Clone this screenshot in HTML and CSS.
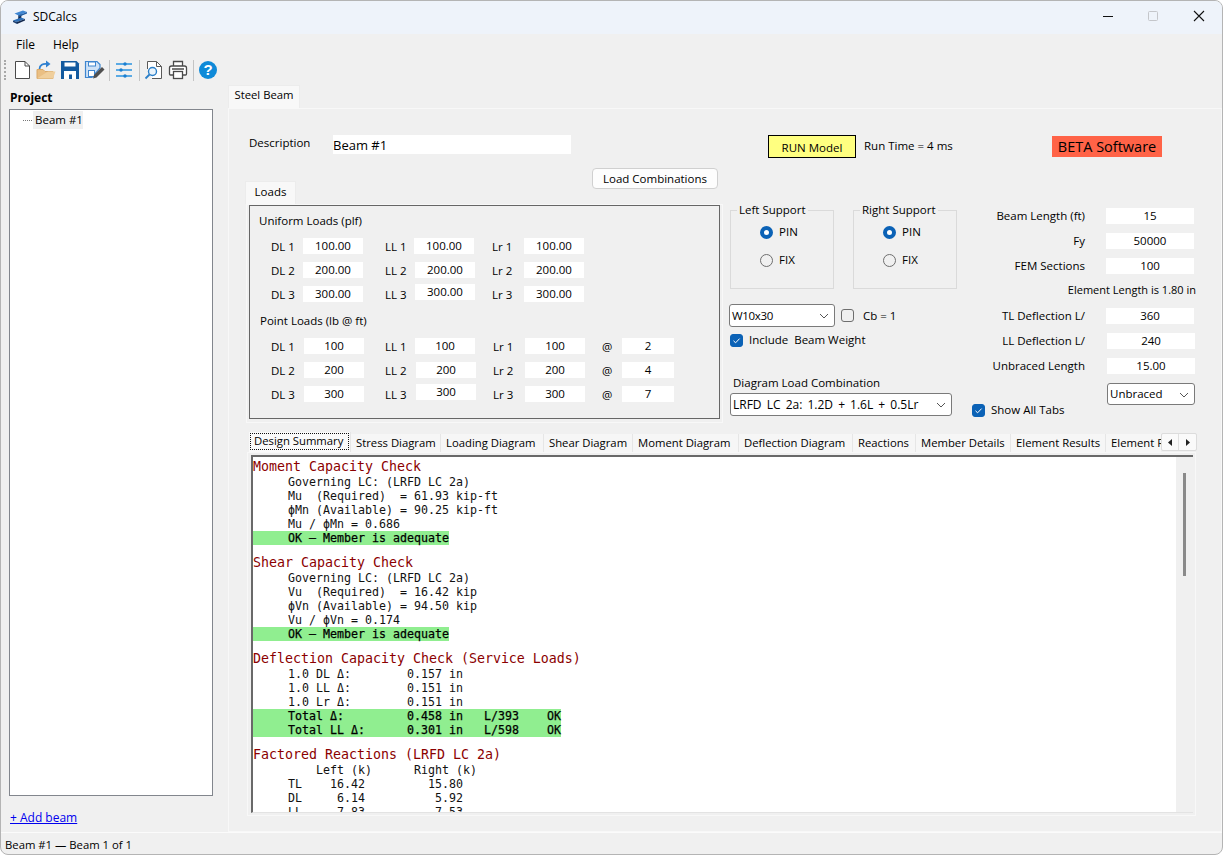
FILE: index.html
```html
<!DOCTYPE html>
<html lang="en">
<head>
<meta charset="utf-8">
<title>SDCalcs</title>
<link rel="stylesheet" href="styles.css">
</head>
<body>
<div class="window">
  <header class="titlebar">
    <svg class="app-icon" width="16" height="16" viewBox="0 0 16 16"><path d="M6.5 6 9.5 5 9.2 10 6 11Z" fill="#16284a"/><path d="M2.5 4.5 11 1.5 15 3 6.5 6.5Z" fill="#3f86d2"/><path d="M6.5 6.5 15 3 15 4.5 6.5 8Z" fill="#1f5da3"/><path d="M1 11.5 9 8.5 13 10 5 13Z" fill="#2c6fb8"/><path d="M5 13 13 10 13 11.5 5 15Z" fill="#13294f"/><path d="M1 11.5 5 13V15L1 13Z" fill="#1c3f70"/></svg>
    <span class="app-name">SDCalcs</span>
    <div class="win-controls">
      <svg class="win-btn" width="46" height="32" viewBox="0 0 46 32"><path d="M18 15.5H28" stroke="#111" stroke-width="1"/></svg>
      <svg class="win-btn" width="46" height="32" viewBox="0 0 46 32"><rect x="17.5" y="10.5" width="9" height="9" rx="1" fill="none" stroke="#c4c6ca"/></svg>
      <svg class="win-btn" width="46" height="32" viewBox="0 0 46 32"><path d="M17 10 27 20M27 10 17 20" stroke="#111" stroke-width="1.1"/></svg>
    </div>
  </header>

  <nav class="menubar"><span class="menu-item">File</span><span class="menu-item">Help</span></nav>

  <div class="toolbar">
    <span class="grip"></span>
    <svg class="tool" viewBox="0 0 24 24"><path d="M5.5 3.5H15L19.5 8V20.5H5.5Z" fill="#fff" stroke="#4a4a4a"/><path d="M15 3.5V8H19.5" fill="none" stroke="#4a4a4a"/></svg>
    <svg class="tool" viewBox="0 0 24 24"><path d="M3 20.5V11.5H9L11 13.5H19V20.5Z" fill="#eabf83" stroke="#d9a868"/><path d="M14 13.5H21.5L19 20.5H3Z" fill="#f0cf9c"/><path d="M5.5 11C5.5 7 9 5.5 13 6" fill="none" stroke="#2f80d0" stroke-width="1.8"/><path d="M12 2.5 16.5 6 12 9.5Z" fill="#2f80d0"/></svg>
    <svg class="tool" viewBox="0 0 24 24"><path d="M3 3H18.5L21 5.5V21H3Z" fill="#135a9f"/><rect x="6.5" y="4.5" width="11" height="4" fill="#fff"/><rect x="6" y="13" width="12" height="8" fill="#fff"/><rect x="11" y="16.5" width="3" height="4.5" fill="#135a9f"/></svg>
    <svg class="tool" viewBox="0 0 24 24"><path d="M3.5 3.5H15L18 6.5V10L10 19.5H3.5Z" fill="#cfe2f6" stroke="#3f86cf" stroke-width="1.2"/><rect x="6.5" y="4" width="7" height="4" fill="#fff" stroke="#3f86cf"/><rect x="6.5" y="12.5" width="6" height="6" fill="#fff" stroke="#3f86cf"/><path d="M11 20.5 12 17 20 9 22.5 11.5 14.5 19.5Z" fill="#4f4f4f"/></svg>
    <span class="tool-sep"></span>
    <svg class="tool" viewBox="0 0 24 24"><path d="M4 6H20M4 12H20M4 18H20" stroke="#2a93e0" stroke-width="1.7"/><circle cx="13" cy="6" r="1.7" fill="#1b7fd0"/><circle cx="9" cy="12" r="1.7" fill="#1b7fd0"/><circle cx="13" cy="18" r="1.7" fill="#1b7fd0"/></svg>
    <span class="tool-sep"></span>
    <svg class="tool" viewBox="0 0 24 24"><path d="M5.5 11V3.5H14.5L19.5 8.5V20.5H10" fill="#fff" stroke="#5a5a5a"/><path d="M14.5 3.5V8.5H19.5" fill="none" stroke="#5a5a5a"/><circle cx="10.5" cy="13.5" r="4" fill="#eaf4fc" stroke="#2a7fc9" stroke-width="1.4"/><path d="M7.5 16.5 3.5 20.5" stroke="#2a7fc9" stroke-width="1.8"/></svg>
    <svg class="tool" viewBox="0 0 24 24"><path d="M7.5 8V3.5H16.5V8M7.5 17H4.5C3.9 17 3.5 16.6 3.5 16V10C3.5 8.9 4.2 8 5.5 8H18.5C19.8 8 20.5 8.9 20.5 10V16C20.5 16.6 20.1 17 19.5 17H16.5" fill="#fff" stroke="#4a4a4a" stroke-width="1.3"/><rect x="7.5" y="13.5" width="9" height="7" fill="#fff" stroke="#4a4a4a" stroke-width="1.3"/><path d="M6 11H18" stroke="#4a4a4a" stroke-width="1.3"/></svg>
    <span class="tool-sep"></span>
    <svg class="tool" viewBox="0 0 24 24"><circle cx="12" cy="12" r="9" fill="#0f8ad8"/><text x="12" y="17.3" class="help-mark">?</text></svg>
  </div>

  <div class="main">
    <aside class="sidebar">
      <div class="project-label">Project</div>
      <div class="tree">
        <div class="tree-node"><span class="tree-dots"></span><span class="tree-name">Beam #1</span></div>
      </div>
      <a class="add-link" href="#">+ Add beam</a>
    </aside>

    <section class="workspace">
      <div class="main-tab">Steel Beam</div>
      <div class="page">
        <div class="top-row">
          <div class="desc-label">Description</div>
          <div class="desc-field">Beam #1</div>
          <div class="run-btn">RUN Model</div>
          <div class="run-time">Run Time = 4 ms</div>
          <div class="beta">BETA Software</div>
        </div>

        <div class="config">
          <div class="loads-col">
            <div class="loads-head">
              <div class="loads-tab">Loads</div>
              <div class="combo-btn">Load Combinations</div>
            </div>
            <div class="loads-panel">
              <div class="loads-box">
                <div class="group-title">Uniform Loads (plf)</div>
                <div class="load-grid">
                  <span class="lbl">DL 1</span><span class="field">100.00</span><span class="lbl pad-ll">LL 1</span><span class="field">100.00</span><span class="lbl pad-lr">Lr 1</span><span class="field">100.00</span>
                  <span class="lbl">DL 2</span><span class="field">200.00</span><span class="lbl pad-ll">LL 2</span><span class="field shift">200.00</span><span class="lbl pad-lr">Lr 2</span><span class="field">200.00</span>
                  <span class="lbl">DL 3</span><span class="field">300.00</span><span class="lbl pad-ll">LL 3</span><span class="field shift raise">300.00</span><span class="lbl pad-lr">Lr 3</span><span class="field">300.00</span>
                </div>
                <div class="group-title point-title">Point Loads (lb @ ft)</div>
                <div class="load-grid point-grid">
                  <span class="lbl">DL 1</span><span class="field">100</span><span class="lbl pad-ll">LL 1</span><span class="field">100</span><span class="lbl pad-lr">Lr 1</span><span class="field">100</span><span class="lbl pad-at">@</span><span class="field">2</span>
                  <span class="lbl">DL 2</span><span class="field">200</span><span class="lbl pad-ll">LL 2</span><span class="field shift">200</span><span class="lbl pad-lr">Lr 2</span><span class="field">200</span><span class="lbl pad-at">@</span><span class="field">4</span>
                  <span class="lbl">DL 3</span><span class="field">300</span><span class="lbl pad-ll">LL 3</span><span class="field shift raise">300</span><span class="lbl pad-lr">Lr 3</span><span class="field">300</span><span class="lbl pad-at">@</span><span class="field">7</span>
                </div>
              </div>
            </div>
          </div>

          <div class="mid-col">
            <div class="supports">
              <div class="support">
                <span class="legend">Left Support</span>
                <div class="radio-row"><span class="radio on"></span>PIN</div>
                <div class="radio-row"><span class="radio"></span>FIX</div>
              </div>
              <div class="support">
                <span class="legend">Right Support</span>
                <div class="radio-row"><span class="radio on"></span>PIN</div>
                <div class="radio-row"><span class="radio"></span>FIX</div>
              </div>
            </div>
            <div class="section-row">
              <div class="select section-select">W10x30<svg class="chev" width="10" height="6" viewBox="0 0 10 6"><path d="M1 1 5 5 9 1" fill="none" stroke="#555"/></svg></div>
              <span class="check"></span><span class="cb-label">Cb = 1</span>
            </div>
            <div class="check-row include"><span class="check on"><svg width="13" height="13" viewBox="0 0 13 13"><path d="M3.5 6.8 5.6 8.8 9.6 4.6" fill="none" stroke="#fff"/></svg></span>Include&nbsp; Beam Weight</div>
            <div class="diagram-label">Diagram Load Combination</div>
            <div class="select diagram-select">LRFD LC 2a: 1.2D + 1.6L + 0.5Lr<svg class="chev" width="10" height="6" viewBox="0 0 10 6"><path d="M1 1 5 5 9 1" fill="none" stroke="#555"/></svg></div>
          </div>

          <div class="props-col">
            <div class="prop"><span class="prop-label">Beam Length (ft)</span><span class="field prop-field">15</span></div>
            <div class="prop"><span class="prop-label">Fy</span><span class="field prop-field">50000</span></div>
            <div class="prop"><span class="prop-label">FEM Sections</span><span class="field prop-field">100</span></div>
            <div class="element-note">Element Length is 1.80 in</div>
            <div class="prop"><span class="prop-label">TL Deflection L/</span><span class="field prop-field">360</span></div>
            <div class="prop"><span class="prop-label">LL Deflection L/</span><span class="field prop-field shift">240</span></div>
            <div class="prop"><span class="prop-label">Unbraced Length</span><span class="field prop-field shift">15.00</span></div>
            <div class="props-foot">
              <div class="check-row show-tabs"><span class="check on"><svg width="13" height="13" viewBox="0 0 13 13"><path d="M3.5 6.8 5.6 8.8 9.6 4.6" fill="none" stroke="#fff"/></svg></span>Show All Tabs</div>
              <div class="select brace-select">Unbraced<svg class="chev" width="10" height="6" viewBox="0 0 10 6"><path d="M1 1 5 5 9 1" fill="none" stroke="#555"/></svg></div>
            </div>
          </div>
        </div>

        <div class="results">
          <div class="result-tabs">
            <div class="tab-strip">
              <span class="rtab active"><span class="focus">Design Summary</span></span>
              <span class="rtab">Stress Diagram</span>
              <span class="rtab">Loading Diagram</span>
              <span class="rtab">Shear Diagram</span>
              <span class="rtab">Moment Diagram</span>
              <span class="rtab">Deflection Diagram</span>
              <span class="rtab">Reactions</span>
              <span class="rtab">Member Details</span>
              <span class="rtab">Element Results</span>
              <span class="rtab">Element Results</span>
            </div>
            <div class="tab-arrows">
              <span class="arrow"><svg width="5" height="7" viewBox="0 0 5 7"><path d="M4 0V7L0 3.5Z" fill="#222"/></svg></span>
              <span class="arrow"><svg width="5" height="7" viewBox="0 0 5 7"><path d="M1 0V7L5 3.5Z" fill="#222"/></svg></span>
            </div>
          </div>
          <div class="result-body">
            <div class="report-box">
              <div class="report">
                <div class="rh">Moment Capacity Check</div>
                <div class="rl">     Governing LC: (LRFD LC 2a)</div>
                <div class="rl">     Mu  (Required)  = 61.93 kip-ft</div>
                <div class="rl">     ϕMn (Available) = 90.25 kip-ft</div>
                <div class="rl">     Mu / ϕMn = 0.686</div>
                <div class="rl ok">     OK — Member is adequate</div>
                <div class="rh">Shear Capacity Check</div>
                <div class="rl">     Governing LC: (LRFD LC 2a)</div>
                <div class="rl">     Vu  (Required)  = 16.42 kip</div>
                <div class="rl">     ϕVn (Available) = 94.50 kip</div>
                <div class="rl">     Vu / ϕVn = 0.174</div>
                <div class="rl ok">     OK — Member is adequate</div>
                <div class="rh">Deflection Capacity Check (Service Loads)</div>
                <div class="rl">     1.0 DL Δ:        0.157 in</div>
                <div class="rl">     1.0 LL Δ:        0.151 in</div>
                <div class="rl">     1.0 Lr Δ:        0.151 in</div>
                <div class="rl ok">     Total Δ:         0.458 in   L/393    OK</div>
                <div class="rl ok">     Total LL Δ:      0.301 in   L/598    OK</div>
                <div class="rh">Factored Reactions (LRFD LC 2a)</div>
                <div class="rl">         Left (k)      Right (k)</div>
                <div class="rl">     TL    16.42         15.80</div>
                <div class="rl">     DL     6.14          5.92</div>
                <div class="rl">     LL     7.83          7.53</div>
              </div>
              <div class="scrollbar"><span class="thumb"></span></div>
            </div>
          </div>
        </div>
      </div>
    </section>
  </div>

  <footer class="statusbar">Beam #1 — Beam 1 of 1</footer>
</div>
</body>
</html>
```

FILE: styles.css
```css
* { box-sizing: border-box; }
html, body { margin: 0; padding: 0; background: #fff; }
body {
  width: 1225px;
  height: 857px;
  overflow: hidden;
  font-family: "Open Sans", "Noto Sans", "Liberation Sans", sans-serif;
  font-size: 11.5px;
  line-height: 16px;
  color: #000;
}
.window {
  width: 1223px;
  height: 855px;
  background: #f0f0f0;
  border: 1px solid #b4b4b4;
  border-radius: 8px;
  overflow: hidden;
  display: flex;
  flex-direction: column;
}
.titlebar {
  height: 33px;
  flex: none;
  background: #eef3fa;
  display: flex;
  align-items: center;
  padding-left: 11px;
}
.app-icon { flex: none; margin-top: -1px; }
.app-name { margin-left: 5px; font-size: 12px; margin-top: -2px; }
.win-controls { margin-left: auto; display: flex; margin-right: -1px; align-self: flex-start; }
.win-btn { display: block; }

.menubar { height: 22px; flex: none; display: flex; align-items: center; padding-left: 15px; font-size: 12px; }
.menu-item { margin-right: 18px; }

.toolbar { height: 28px; flex: none; display: flex; align-items: center; padding-left: 3px; }
.grip { width: 2px; height: 20px; margin-right: 4px; border-left: 2px dotted #a8a8a8; }
.tool { width: 24px; height: 24px; flex: none; display: block; }
.tool-sep { width: 1px; height: 21px; background: #c4c4c4; margin: 0 2px 0 3px; flex: none; }
.help-mark { font: 700 15px "Liberation Sans", sans-serif; fill: #fff; text-anchor: middle; }

.main { flex: 1; display: flex; min-height: 0; }
.sidebar { width: 227px; flex: none; padding: 6px 0 0 8px; display: flex; flex-direction: column; }
.project-label { font-weight: 700; font-size: 12px; margin-left: 1px; }
.tree { width: 204px; height: 687px; margin-top: 3px; background: #fff; border: 1px solid #82868d; padding-top: 1px; }
.tree-node { display: flex; align-items: center; height: 18px; }
.tree-dots { width: 9px; margin: 0 1px 0 13px; border-top: 1px dotted #777; }
.tree-name { width: 50px; background: #f0f0f0; padding-left: 2px; line-height: 18px; white-space: nowrap; }
.add-link { margin: 14px 0 0 1px; color: #0000ee; font-size: 12px; }

.workspace { flex: 1; min-width: 0; display: flex; flex-direction: column; padding-top: 1px; }
.main-tab { width: 72px; height: 23px; background: #f8f8f8; border: 1px solid #ececec; border-bottom: 0; text-align: center; line-height: 18px; font-size: 11.3px; }
.page { flex: 1; border: 1px solid #f8f8f8; padding: 26px 0 0 17px; }

.top-row { display: flex; align-items: flex-start; height: 33px; }
.desc-label { width: 84px; margin-left: 3px; }
.desc-field { width: 238px; height: 19px; background: #fff; font-size: 13px; line-height: 20px; }
.run-btn { width: 88px; height: 23px; margin-left: 197px; background: #ffff80; border: 1px solid #000; text-align: center; line-height: 23px; }
.run-time { width: 196px; padding-left: 8px; line-height: 22px; }
.beta { width: 110px; height: 21px; margin-top: 1px; background: #ff6347; text-align: center; font-size: 14.5px; line-height: 21px; }

.config { display: flex; height: 255px; }
.loads-col { width: 477px; flex: none; margin-right: 7px; display: flex; flex-direction: column; }
.loads-head { height: 36px; display: flex; justify-content: space-between; align-items: flex-start; }
.loads-tab { width: 51px; height: 23px; margin: 13px 0 0 -1px; background: #f8f8f8; border: 1px solid #ececec; border-bottom: 0; text-align: center; line-height: 19px; }
.combo-btn { width: 126px; height: 21px; margin-right: 5px; background: #fdfdfd; border: 1px solid #d0d0d0; border-radius: 4px; text-align: center; line-height: 19px; }
.loads-panel { flex: 1; border: 1px solid #f8f8f8; padding: 0 2px 2px; }
.loads-box { width: 471px; height: 214px; border: 1px solid #666; padding: 7px 0 0 9px; }
.group-title { margin-bottom: 9px; }
.point-title { margin: 3px 0 9px 1px; }
.load-grid { display: grid; margin-left: 12px; grid-template-columns: 32px 60px 51px 60px 50px 60px; grid-auto-rows: 24px; align-items: start; }
.point-grid { grid-template-columns: 33px 60px 51px 60px 50px 60px 37px 52px; }
.lbl { line-height: 17px; white-space: nowrap; }
.pad-ll { padding-left: 22px; }
.point-grid .pad-ll { padding-left: 21px; }
.pad-lr { padding-left: 18px; }
.pad-at { padding-left: 17px; }
.field { display: block; height: 16px; background: #fff; text-align: center; line-height: 15px; }
.load-grid .shift { margin: 0 -1px 0 1px; }
.load-grid .raise { margin-top: -2px; }

.mid-col { width: 240px; flex: none; padding-top: 42px; }
.supports { display: flex; gap: 19px; }
.support { width: 104px; height: 79px; border: 1px solid #dadada; padding-left: 29px; }
.legend { display: block; width: fit-content; margin: -9px 0 0 -23px; padding: 0 2px; background: #f0f0f0; white-space: nowrap; }
.radio-row { height: 28px; display: flex; align-items: center; gap: 6px; }
.radio { width: 13px; height: 13px; border: 1px solid #6e6e6e; border-radius: 50%; flex: none; }
.radio.on { border: 4px solid #0b62b6; background: #fff; }
.section-row { display: flex; align-items: center; margin: 15px 0 0 -1px; }
.select { position: relative; height: 23px; background: #fff; border: 1px solid #7a7a7a; border-radius: 3px; padding-left: 2px; line-height: 21px; white-space: nowrap; }
.chev { position: absolute; right: 5px; top: 8px; }
.section-select { width: 106px; letter-spacing: -0.3px; }
.check { width: 13px; height: 13px; flex: none; border: 1px solid #6e6e6e; border-radius: 3px; display: block; }
.check.on { background: #0b62b6; border-color: #0b62b6; }
.check.on svg { display: block; margin: -1px; }
.section-row .check { margin-left: 6px; }
.cb-label { margin-left: 9px; }
.check-row { display: flex; align-items: center; gap: 6px; height: 14px; white-space: nowrap; }
.include { margin-top: 6px; }
.diagram-label { margin: 28px 0 2px 3px; }
.diagram-select { width: 222px; font-size: 12px; word-spacing: 2px; }

.props-col { width: 226px; flex: none; padding-top: 40px; }
.prop { display: flex; height: 25px; }
.prop-label { width: 115px; text-align: right; white-space: nowrap; line-height: 16px; }
.prop-field { width: 88px; margin-left: 21px; }
.prop-field.shift { margin-left: 22px; }
.element-note { height: 25px; text-align: right; line-height: 13px; font-size: 11px; white-space: nowrap; }
.props-foot { display: flex; height: 34px; align-items: flex-start; }
.show-tabs { align-self: flex-end; margin-left: 2px; }
.brace-select { width: 88px; height: 22px; line-height: 20px; margin: 0 1px 0 auto; }

.results { margin: 9px 0 0 1px; width: 949px; }
.result-tabs { height: 20px; display: flex; padding-left: 2px; font-size: 11.3px; }
.tab-strip { width: 912px; flex: none; height: 20px; overflow: hidden; display: grid; grid-template-columns: 102px 90px 103px 89px 106px 114px 63px 95px 95px 95px; }
.rtab { height: 18px; margin-top: 2px; background: #f6f6f6; border-right: 1px solid #e6e6e6; padding-left: 5px; line-height: 18px; white-space: nowrap; overflow: hidden; }
.rtab.active { height: 20px; margin-top: 0; background: #fafafa; padding: 1px; }
.focus { display: block; height: 17px; padding: 0 3px; border: 1px dotted #111; line-height: 14px; }
.tab-arrows { display: flex; height: 18px; margin-top: 1px; border: 1px solid #dcdcdc; background: #fafafa; border-radius: 2px; }
.arrow { width: 17px; display: flex; align-items: center; justify-content: center; border-right: 1px solid #e0e0e0; }
.arrow:last-child { border-right: 0; }
.result-body { height: 364px; border: 1px solid #f8f8f8; padding: 2px 2px 3px 3px; }
.report-box { height: 358px; display: flex; border-top: 2px solid #696969; border-left: 2px solid #696969; border-bottom: 1px solid #e3e3e3; }
.report { flex: 1; min-width: 0; background: #fff; overflow: hidden; font-family: "DejaVu Sans Mono", "Liberation Mono", monospace; font-size: 11.63px; line-height: 14px; color: #111; }
.rh { height: 18px; line-height: 20px; font-size: 13.29px; color: #8b0000; }
.rl { height: 14px; white-space: pre; width: fit-content; }
.ok { background: #90ee90; color: #000; -webkit-text-stroke: 0.25px #000; }
.ok + .rh { margin-top: 8px; }
.scrollbar { width: 17px; flex: none; background: #f0f0f0; padding: 16px 0 0 7px; }
.thumb { display: block; width: 3px; height: 103px; background: #8a8a8a; }

.statusbar { height: 22px; flex: none; border-top: 1px solid #fbfbfb; padding-left: 4px; line-height: 23px; font-size: 11.3px; }
```
